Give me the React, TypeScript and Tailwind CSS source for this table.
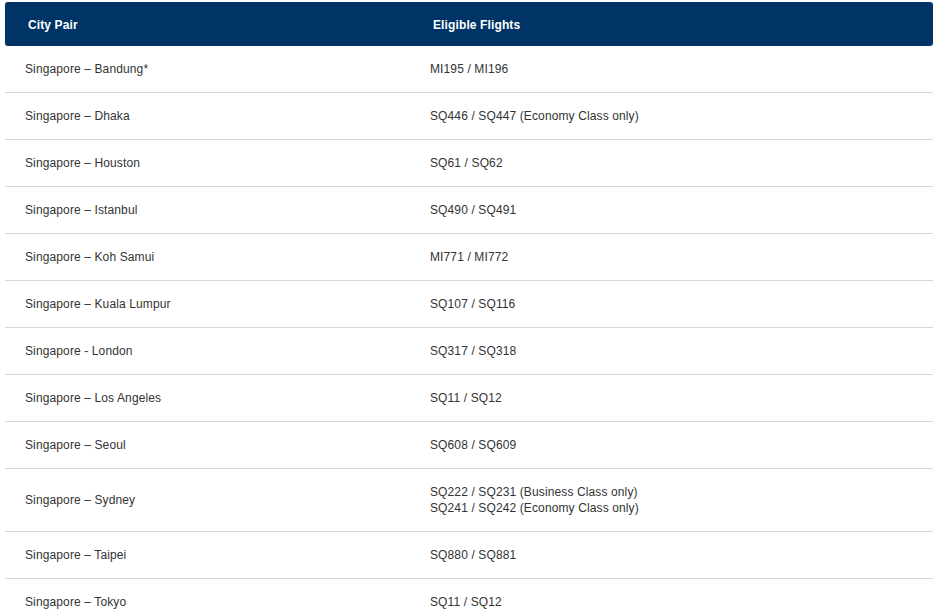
const rows: { pair: string; flights: string[] }[] = [
  { pair: 'Singapore – Bandung*', flights: ['MI195 / MI196'] },
  { pair: 'Singapore – Dhaka', flights: ['SQ446 / SQ447 (Economy Class only)'] },
  { pair: 'Singapore – Houston', flights: ['SQ61 / SQ62'] },
  { pair: 'Singapore – Istanbul', flights: ['SQ490 / SQ491'] },
  { pair: 'Singapore – Koh Samui', flights: ['MI771 / MI772'] },
  { pair: 'Singapore – Kuala Lumpur', flights: ['SQ107 / SQ116'] },
  { pair: 'Singapore - London', flights: ['SQ317 / SQ318'] },
  { pair: 'Singapore – Los Angeles', flights: ['SQ11 / SQ12'] },
  { pair: 'Singapore – Seoul', flights: ['SQ608 / SQ609'] },
  {
    pair: 'Singapore – Sydney',
    flights: ['SQ222 / SQ231 (Business Class only)', 'SQ241 / SQ242 (Economy Class only)'],
  },
  { pair: 'Singapore – Taipei', flights: ['SQ880 / SQ881'] },
  { pair: 'Singapore – Tokyo', flights: ['SQ11 / SQ12'] },
];

export default function App() {
  return (
    <div className="min-h-screen bg-white pt-[2px] pl-[5px] pr-[11px] font-['Liberation_Sans',Arial,sans-serif] text-[12px] tracking-[0.12px] text-[#333]">
      {/* Header */}
      <div className="grid h-[44px] grid-cols-[405px_1fr] items-center rounded-[3px] bg-[#003466] font-bold text-white">
        <div className="pl-[23px] pt-[1px]">City Pair</div>
        <div className="pl-[23px] pt-[1px]">Eligible Flights</div>
      </div>

      {/* Rows */}
      {rows.map((row) => (
        <div
          key={row.pair}
          className={`grid grid-cols-[405px_1fr] items-center border-b border-[#d6d6d6] leading-[16px] ${
            row.flights.length > 1 ? 'h-[63px]' : 'h-[47px]'
          }`}
        >
          <div className="pl-[20px]">{row.pair}</div>
          <div className="pl-[20px]">
            {row.flights.map((f) => (
              <div key={f}>{f}</div>
            ))}
          </div>
        </div>
      ))}
    </div>
  );
}
